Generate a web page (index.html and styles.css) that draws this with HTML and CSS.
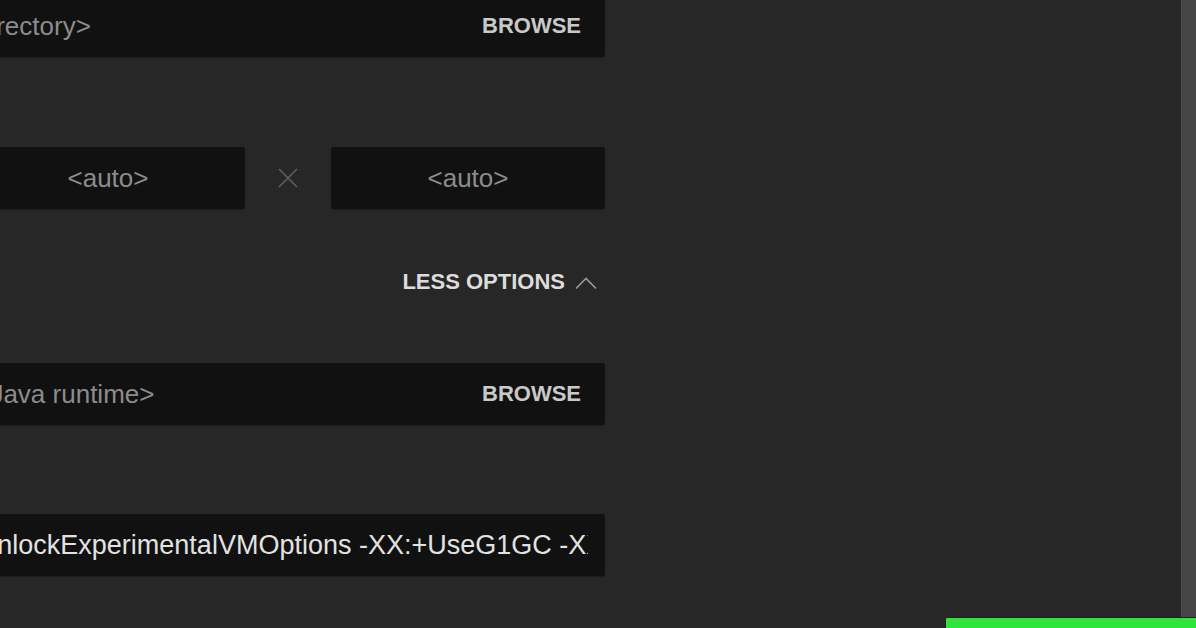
FILE: index.html
```html
<!DOCTYPE html>
<html lang="en">
<head>
<meta charset="utf-8">
<title>Installation settings</title>
<link rel="stylesheet" href="styles.css">
</head>
<body>
<div class="page">
  <main class="content">
    <div class="form">
      <div class="field-input">
        <span class="placeholder">&lt;Use default directory&gt;</span>
        <span class="browse">BROWSE</span>
      </div>

      <div class="res-row">
        <div class="field-input centered"><span class="placeholder">&lt;auto&gt;</span></div>
        <div class="times">
          <svg width="20" height="20" viewBox="0 0 20 20"><path d="M1 1 L19 19 M19 1 L1 19" stroke="#5e5e5e" stroke-width="1.6" fill="none"/></svg>
        </div>
        <div class="field-input centered"><span class="placeholder">&lt;auto&gt;</span></div>
      </div>

      <div class="options-row">
        <span class="options-label">LESS OPTIONS</span>
        <svg class="chevron" width="22" height="14" viewBox="0 0 22 14"><path d="M1 12.5 L11 2.5 L21 12.5" stroke="#9a9a9a" stroke-width="1.6" fill="none"/></svg>
      </div>

      <div class="field-input java">
        <span class="placeholder">&lt;Use bundled Java runtime&gt;</span>
        <span class="browse">BROWSE</span>
      </div>

      <div class="field-input jvm">
        <div class="jvm-clip">
          <span class="jvm-text">-Xmx2G -XX:+UnlockExperimentalVMOptions -XX:+UseG1GC -XX:G1NewSizePercent=20 -XX:G1ReservePercent=20 -XX:MaxGCPauseMillis=50 -XX:G1HeapRegionSize=32M</span>
        </div>
      </div>
    </div>
  </main>
  <div class="scrollbar"></div>
</div>
<div class="primary-button"></div>
</body>
</html>
```

FILE: styles.css
```css
html, body {
  margin: 0;
  padding: 0;
}

body {
  width: 1196px;
  height: 628px;
  overflow: hidden;
  background: #272727;
  font-family: "Liberation Sans", Arial, sans-serif;
  position: relative;
}

.page {
  display: flex;
  height: 628px;
}

.content {
  flex: 1;
  overflow: hidden;
}

.form {
  margin-left: -198px;
  margin-top: -5px;
  width: 803px;
  display: flex;
  flex-direction: column;
}

.field-input {
  height: 62px;
  box-sizing: border-box;
  background: #111111;
  border-radius: 3px;
  display: flex;
  align-items: center;
  justify-content: space-between;
  padding: 0 24px 0 20px;
  box-shadow: 0 1px 1px rgba(0, 0, 0, 0.25);
}

.placeholder {
  font-size: 26px;
  color: #8c8c8c;
  white-space: nowrap;
}

.browse {
  font-size: 22px;
  font-weight: bold;
  color: #c9c9c9;
}

.res-row {
  margin-top: 90px;
  padding-left: 169px;
  display: grid;
  grid-template-columns: 274px 86px 274px;
}

.field-input.centered {
  justify-content: center;
  padding: 0;
}

.times {
  display: flex;
  align-items: center;
  justify-content: center;
}

.options-row {
  margin-top: 58px;
  height: 30px;
  display: flex;
  align-items: center;
  justify-content: flex-end;
  gap: 10px;
  padding-right: 8px;
}

.options-label {
  font-size: 22px;
  font-weight: bold;
  color: #dcdcdc;
}

.chevron {
  margin-top: 2px;
}

.java {
  margin-top: 66px;
}

.jvm {
  margin-top: 89px;
  padding-right: 17px;
  justify-content: flex-start;
}

.jvm-clip {
  flex: 1;
  min-width: 0;
  overflow: hidden;
}

.jvm-text {
  display: block;
  margin-left: -19px;
  font-size: 27px;
  color: #e2e2e2;
  white-space: nowrap;
}

.scrollbar {
  width: 14px;
  background: #454545;
  border-left: 1px solid #4d4d4d;
}

.primary-button {
  position: absolute;
  left: 945px;
  top: 617px;
  width: 260px;
  height: 50px;
  background: #2ee53b;
  border: 1px solid #2a1f22;
  border-radius: 2px;
}
```
